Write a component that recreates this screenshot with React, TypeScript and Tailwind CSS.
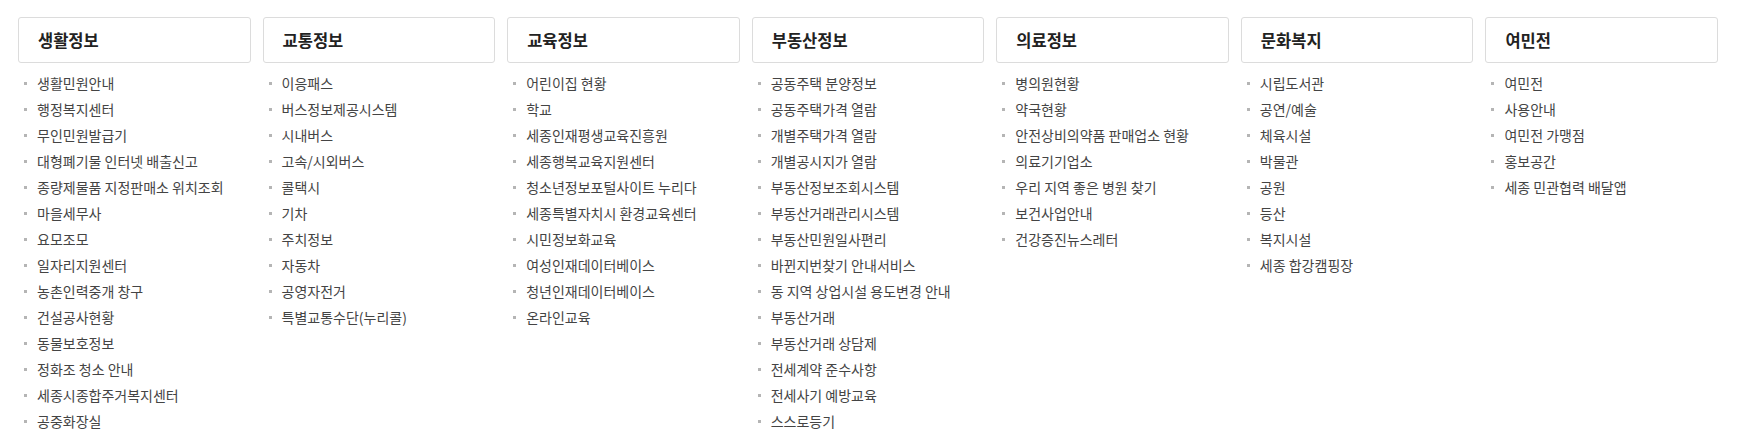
import React from "react";

type Category = { title: string; items: string[] };

const CATEGORIES: Category[] = [
  {
    title: "생활정보",
    items: [
      "생활민원안내",
      "행정복지센터",
      "무인민원발급기",
      "대형폐기물 인터넷 배출신고",
      "종량제물품 지정판매소 위치조회",
      "마을세무사",
      "요모조모",
      "일자리지원센터",
      "농촌인력중개 창구",
      "건설공사현황",
      "동물보호정보",
      "정화조 청소 안내",
      "세종시종합주거복지센터",
      "공중화장실",
    ],
  },
  {
    title: "교통정보",
    items: [
      "이응패스",
      "버스정보제공시스템",
      "시내버스",
      "고속/시외버스",
      "콜택시",
      "기차",
      "주치정보",
      "자동차",
      "공영자전거",
      "특별교통수단(누리콜)",
    ],
  },
  {
    title: "교육정보",
    items: [
      "어린이집 현황",
      "학교",
      "세종인재평생교육진흥원",
      "세종행복교육지원센터",
      "청소년정보포털사이트 누리다",
      "세종특별자치시 환경교육센터",
      "시민정보화교육",
      "여성인재데이터베이스",
      "청년인재데이터베이스",
      "온라인교육",
    ],
  },
  {
    title: "부동산정보",
    items: [
      "공동주택 분양정보",
      "공동주택가격 열람",
      "개별주택가격 열람",
      "개별공시지가 열람",
      "부동산정보조회시스템",
      "부동산거래관리시스템",
      "부동산민원일사편리",
      "바뀐지번찾기 안내서비스",
      "동 지역 상업시설 용도변경 안내",
      "부동산거래",
      "부동산거래 상담제",
      "전세계약 준수사항",
      "전세사기 예방교육",
      "스스로등기",
    ],
  },
  {
    title: "의료정보",
    items: [
      "병의원현황",
      "약국현황",
      "안전상비의약품 판매업소 현황",
      "의료기기업소",
      "우리 지역 좋은 병원 찾기",
      "보건사업안내",
      "건강증진뉴스레터",
    ],
  },
  {
    title: "문화복지",
    items: [
      "시립도서관",
      "공연/예술",
      "체육시설",
      "박물관",
      "공원",
      "등산",
      "복지시설",
      "세종 합강캠핑장",
    ],
  },
  {
    title: "여민전",
    items: ["여민전", "사용안내", "여민전 가맹점", "홍보공간", "세종 민관협력 배달앱"],
  },
];

function CategoryColumn({ title, items }: Category) {
  return (
    <div className="flex flex-col">
      <div className="flex h-[46px] items-center rounded-[3px] border border-[#dcdcdc] bg-white pl-[19px]">
        <h3 className="text-[16.5px] font-bold text-[#222]">{title}</h3>
      </div>
      <ul className="mt-[7px] flex flex-col">
        {items.map((item) => (
          <li key={item} className="flex h-[26px] items-center pl-[6px]">
            <span className="mr-[10px] h-[3px] w-[3px] shrink-0 bg-[#b5b5b5]" />
            <a href="#" className="text-[14px] text-[#444]">
              {item}
            </a>
          </li>
        ))}
      </ul>
    </div>
  );
}

export default function App() {
  return (
    <div
      className="min-h-screen w-full bg-white"
      style={{ fontFamily: '"Noto Sans CJK KR", "Noto Sans", sans-serif' }}
    >
      <div className="grid grid-cols-7 gap-x-[12px] pl-[18px] pr-[21px] pt-[17px]">
        {CATEGORIES.map((cat) => (
          <CategoryColumn key={cat.title} {...cat} />
        ))}
      </div>
    </div>
  );
}
